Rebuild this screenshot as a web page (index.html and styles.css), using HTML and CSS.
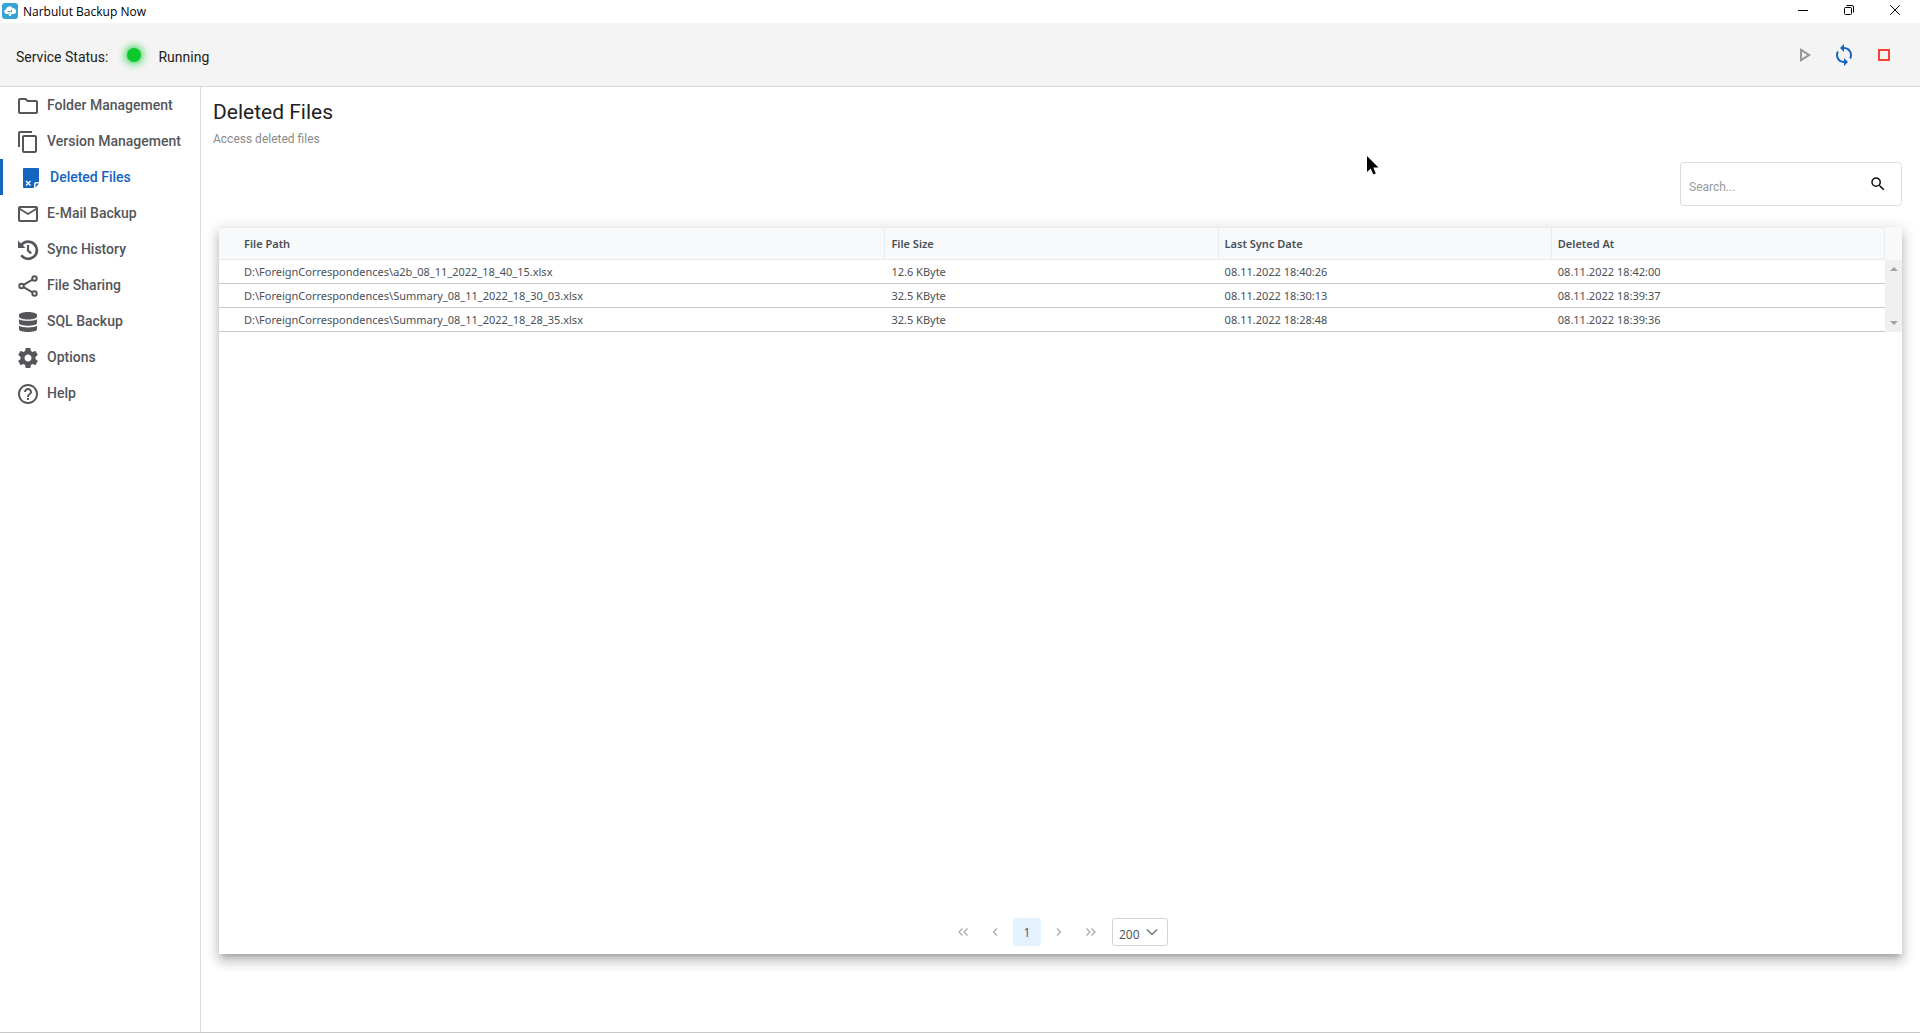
FILE: index.html
```html
<!DOCTYPE html>
<html lang="en">
<head>
    <meta charset="UTF-8">
    <meta name="viewport" content="width=device-width, initial-scale=1.0">
    <title>Narbulut Backup Now</title>
    <link rel="stylesheet" href="styles.css">
</head>
<body>
    <div class="titlebar">
        <svg class="logo" viewBox="0 0 16 16">
            <rect width="16" height="16" rx="3" fill="#35a3d6"/>
            <path d="M4.3 11a2.4 2.4 0 0 1-.3-4.7A3.6 3.6 0 0 1 10.700 5.200a3 3 0 0 1 1.400 5.800z" fill="#fff"/>
            <path d="M5.500 8.500h3M9.500 6.800v2.400M7.500 11.500V10" stroke="#35a3d6" stroke-width="1" fill="none"/>
            <circle cx="8" cy="11.800" r="1.300" fill="#fff"/>
        </svg>
        <span class="app-name">Narbulut Backup Now</span>
        <div class="window-controls">
            <button aria-label="Minimize"><svg viewBox="0 0 10 10"><path d="M0 5.5h10"/></svg></button>
            <button aria-label="Restore"><svg viewBox="0 0 10 10"><rect x=".5" y="2.500" width="7" height="7" rx="1"/><path d="M2.500.5H8A1.500 1.500 0 0 1 9.500 2v5.500"/></svg></button>
            <button aria-label="Close"><svg viewBox="0 0 10 10"><path d="M.2.2l9.600 9.600M9.800.2L.2 9.800"/></svg></button>
        </div>
    </div>

    <header>
        <span class="status-text">Service Status:</span>
        <span class="status-dot"></span>
        <span class="status-text">Running</span>
        <div class="service-actions">
            <button class="start" aria-label="Start"><svg viewBox="0 0 24 24"><path d="M10 8.640L15.270 12 10 15.360V8.640M8 5v14l11-7L8 5z"/></svg></button>
            <button class="restart" aria-label="Restart"><svg viewBox="0 0 24 24"><path d="M12 4V1L8 5l4 4V6c3.310 0 6 2.690 6 6 0 1.010-.25 1.970-.7 2.800l1.460 1.460C19.540 15.030 20 13.570 20 12c0-4.420-3.580-8-8-8zm0 14c-3.310 0-6-2.690-6-6 0-1.010.25-1.970.7-2.800L5.240 7.740C4.460 8.970 4 10.430 4 12c0 4.420 3.580 8 8 8v3l4-4-4-4v3z"/></svg></button>
            <button class="stop" aria-label="Stop"><svg viewBox="0 0 24 24"><path d="M16 8v8H8V8h8m2-2H6v12h12V6z"/></svg></button>
        </div>
    </header>

    <div class="layout">
        <nav class="sidebar">
            <a href="#"><svg viewBox="0 0 24 24"><path d="M9.170 6l2 2H20v10H4V6h5.170M10 4H4c-1.100 0-1.990.9-1.990 2L2 18c0 1.100.9 2 2 2h16c1.100 0 2-.9 2-2V8c0-1.100-.9-2-2-2h-8l-2-2z"/></svg>Folder Management</a>
            <a href="#"><svg viewBox="0 0 24 24"><path d="M16 1H4c-1.100 0-2 .9-2 2v14h2V3h12V1zm3 4H8c-1.100 0-2 .9-2 2v14c0 1.100.9 2 2 2h11c1.100 0 2-.9 2-2V7c0-1.100-.9-2-2-2zm0 16H8V7h11v14z"/></svg>Version Management</a>
            <a href="#" class="active"><svg viewBox="0 0 24 24"><path d="M5 2h14a1 1 0 0 1 1 1v13h-3a2 2 0 0 0-2 2v4H5a1 1 0 0 1-1-1V3a1 1 0 0 1 1-1z"/><path d="M16.500 21.500v-4h3.500z"/><path d="M7 15l4.500 4.500M11.500 15L7 19.500" stroke="#fff" stroke-width="1.400"/></svg>Deleted Files</a>
            <a href="#"><svg viewBox="0 0 24 24"><path d="M22 6c0-1.100-.9-2-2-2H4c-1.100 0-2 .9-2 2v12c0 1.100.9 2 2 2h16c1.100 0 2-.9 2-2V6zm-2 0l-8 5-8-5h16zm0 12H4V8l8 5 8-5v10z"/></svg>E-Mail Backup</a>
            <a href="#"><svg viewBox="0 0 24 24"><path d="M2 2.500v7.500h7.500L6.800 7.300A7.300 7.300 0 1 1 6.300 16.600l-2.100 1.500A10 10 0 1 0 4.900 5.400z"/><path d="M12 7v5.500l3.200 2.800" fill="none" stroke="#54565a" stroke-width="2.200"/></svg>Sync History</a>
            <a href="#"><svg viewBox="0 0 24 24"><g fill="none" stroke="#54565a" stroke-width="2"><circle cx="18.500" cy="4.500" r="2.200"/><circle cx="5.500" cy="12" r="2.200"/><circle cx="18.500" cy="19.500" r="2.200"/><path d="M7.500 10.900l9-5.200M7.500 13.100l9 5.200"/></g></svg>File Sharing</a>
            <a href="#"><svg viewBox="0 0 24 24"><path d="M3 5c0-4 18-4 18 0v1.500c0 4-18 4-18 0z"/><path d="M3 9.200c3.500 2.200 14.500 2.200 18 0v3.800c0 3.600-18 3.600-18 0z"/><path d="M3 15.800c3.500 2.200 14.500 2.200 18 0v3.500c0 3.600-18 3.600-18 0z"/></svg>SQL Backup</a>
            <a href="#"><svg viewBox="0 0 24 24"><path d="M19.430 12.980c.04-.32.07-.64.07-.98s-.03-.66-.07-.98l2.110-1.650c.19-.15.24-.42.12-.64l-2-3.460c-.12-.22-.39-.3-.61-.22l-2.490 1c-.52-.4-1.080-.73-1.690-.98l-.38-2.650A.49.49 0 0 0 14 2h-4c-.25 0-.46.18-.49.42l-.38 2.650c-.61.25-1.170.59-1.690.98l-2.490-1c-.23-.09-.49 0-.61.22l-2 3.460c-.13.22-.07.49.12.64l2.110 1.650c-.04.32-.07.65-.07.98s.03.66.07.98l-2.110 1.650c-.19.15-.24.42-.12.64l2 3.460c.12.22.39.3.61.22l2.490-1c.52.4 1.080.73 1.690.98l.38 2.650c.03.24.24.42.49.42h4c.25 0 .46-.18.49-.42l.38-2.650c.61-.25 1.170-.59 1.690-.98l2.490 1c.23.09.49 0 .61-.22l2-3.460c.12-.22.07-.49-.12-.64l-2.110-1.650zM12 15.500c-1.930 0-3.500-1.570-3.500-3.500s1.570-3.500 3.500-3.500 3.500 1.570 3.500 3.500-1.570 3.500-3.500 3.500z"/></svg>Options</a>
            <a href="#"><svg viewBox="0 0 24 24"><path d="M11 18h2v-2h-2v2zm1-16C6.480 2 2 6.480 2 12s4.480 10 10 10 10-4.480 10-10S17.520 2 12 2zm0 18c-4.410 0-8-3.590-8-8s3.590-8 8-8 8 3.590 8 8-3.590 8-8 8zm0-14c-2.210 0-4 1.790-4 4h2c0-1.100.9-2 2-2s2 .9 2 2c0 2-3 1.750-3 5h2c0-2.250 3-2.500 3-5 0-2.210-1.790-4-4-4z"/></svg>Help</a>
        </nav>

        <main>
            <h1>Deleted Files</h1>
            <p class="subtitle">Access deleted files</p>

            <div class="search">
                <input type="text" placeholder="Search..." aria-label="Search">
                <button aria-label="Search"><svg viewBox="0 0 24 24"><path d="M15.500 14h-.79l-.28-.27A6.471 6.471 0 0 0 16 9.500 6.500 6.500 0 1 0 9.500 16c1.610 0 3.090-.59 4.230-1.570l.27.28v.79l5 4.990L20.490 19l-4.990-5zm-6 0C7.010 14 5 11.990 5 9.500S7.010 5 9.500 5 14 7.010 14 9.500 11.990 14 9.500 14z"/></svg></button>
            </div>

            <div class="card">
                <div class="table-area">
                    <table>
                        <thead>
                            <tr>
                                <th class="path">File Path</th>
                                <th>File Size</th>
                                <th>Last Sync Date</th>
                                <th>Deleted At</th>
                            </tr>
                        </thead>
                        <tbody>
                            <tr>
                                <td>D:\ForeignCorrespondences\a2b_08_11_2022_18_40_15.xlsx</td>
                                <td>12.6 KByte</td>
                                <td>08.11.2022 18:40:26</td>
                                <td>08.11.2022 18:42:00</td>
                            </tr>
                            <tr>
                                <td>D:\ForeignCorrespondences\Summary_08_11_2022_18_30_03.xlsx</td>
                                <td>32.5 KByte</td>
                                <td>08.11.2022 18:30:13</td>
                                <td>08.11.2022 18:39:37</td>
                            </tr>
                            <tr>
                                <td>D:\ForeignCorrespondences\Summary_08_11_2022_18_28_35.xlsx</td>
                                <td>32.5 KByte</td>
                                <td>08.11.2022 18:28:48</td>
                                <td>08.11.2022 18:39:36</td>
                            </tr>
                        </tbody>
                    </table>
                    <div class="scroll-col">
                        <div class="scroll-head"></div>
                        <div class="scrollbar">
                            <svg viewBox="0 0 8 4"><path d="M0 4l4-4 4 4z"/></svg>
                            <svg viewBox="0 0 8 4"><path d="M0 0l4 4 4-4z"/></svg>
                        </div>
                    </div>
                </div>

                <div class="paginator">
                    <button aria-label="First page"><svg viewBox="0 0 12 12"><path d="M5.500 2.500L2 6l3.500 3.500M10.500 2.500L7 6l3.500 3.500"/></svg></button>
                    <button aria-label="Previous page"><svg viewBox="0 0 12 12"><path d="M8 2.500L4.500 6 8 9.500"/></svg></button>
                    <button class="current">1</button>
                    <button aria-label="Next page"><svg viewBox="0 0 12 12"><path d="M4 2.500L7.500 6 4 9.500"/></svg></button>
                    <button aria-label="Last page"><svg viewBox="0 0 12 12"><path d="M1.500 2.500L5 6 1.500 9.500M6.500 2.500L10 6 6.500 9.500"/></svg></button>
                    <div class="page-size">
                        <select aria-label="Rows per page">
                            <option>200</option>
                        </select>
                        <svg viewBox="0 0 12 12"><path d="M1 3.500l5 5 5-5"/></svg>
                    </div>
                </div>
            </div>

            <svg class="cursor" viewBox="0 0 12 19"><path d="M0 0v16l3.700-3.500L6.300 18.500l2.500-1L6.300 11.500H11.500z"/></svg>
        </main>
    </div>
</body>
</html>
```

FILE: styles.css
```css
* {
    box-sizing: border-box;
}
body {
    margin: 0;
    min-height: 100vh;
    display: flex;
    flex-direction: column;
    font-family: Roboto, Arial, sans-serif;
    font-size: 14px;
    color: #212121;
    background-color: #fff;
    border-bottom: 1px solid #c8c8c8;
}
button {
    border: none;
    background: none;
    padding: 0;
    cursor: pointer;
}
svg {
    display: block;
    flex: none;
}

/* title bar */
.titlebar {
    display: flex;
    align-items: center;
    height: 23px;
    padding: 0 2px 1px;
    color: #000;
}
.logo {
    width: 16px;
    height: 16px;
}
.app-name {
    margin-left: 5px;
    font-family: "Open Sans", "Noto Sans", sans-serif;
    font-size: 12px;
}
.window-controls {
    display: flex;
    align-self: flex-start;
    margin-left: auto;
    height: 20px;
}
.window-controls button {
    display: flex;
    align-items: center;
    justify-content: center;
    width: 46px;
}
.window-controls svg {
    width: 10px;
    height: 10px;
    fill: none;
    stroke: #000;
}

/* service status */
header {
    display: flex;
    align-items: center;
    height: 64px;
    padding: 0 24px 0 16px;
    background-color: #f4f4f4;
    border-bottom: 1px solid #d6d6d6;
}
.status-text {
    padding-top: 4px;
}
.status-dot {
    width: 14px;
    height: 14px;
    margin: 0 17px 0 19px;
    border-radius: 50%;
    background-color: #0bc92b;
    box-shadow: 0 0 8px 1px #0bc92b;
}
.service-actions {
    display: flex;
    gap: 16px;
    margin-left: auto;
}
.service-actions svg {
    width: 24px;
    height: 24px;
}
.start {
    fill: #999;
}
.restart {
    fill: #1565c0;
}
.stop {
    fill: #f44336;
}

.layout {
    display: flex;
    flex: 1;
}

/* menu */
.sidebar {
    width: 201px;
    flex: none;
    border-right: 1px solid #dcdcdc;
}
.sidebar a {
    display: flex;
    align-items: center;
    gap: 7px;
    height: 36px;
    padding-left: 16px;
    color: #54565a;
    font-weight: 500;
    text-decoration: none;
}
.sidebar svg {
    width: 24px;
    height: 24px;
    margin-top: 2px;
    fill: #54565a;
}
.sidebar .active {
    color: #1565c0;
    border-left: 3px solid #1565c0;
}
.sidebar .active svg {
    fill: #1565c0;
}

/* content */
main {
    position: relative;
    display: flex;
    flex-direction: column;
    flex: 1;
    padding: 12px 18px 78px;
}
h1 {
    margin: 0 0 0 -6px;
    font-size: 21px;
    line-height: 26px;
    font-weight: 400;
}
.subtitle {
    margin: 6px 0 0 -6px;
    font-size: 12px;
    line-height: 16px;
    color: #8a8a8a;
}
.search {
    display: flex;
    align-items: center;
    align-self: flex-end;
    width: 222px;
    height: 44px;
    margin: 15px 0 21px;
    padding: 0 14px 0 8px;
    border: 1px solid #dedede;
    border-radius: 4px;
}
.search input {
    flex: 1;
    min-width: 0;
    padding: 5px 0 0;
    border: none;
    outline: none;
    font-family: Roboto, Arial, sans-serif;
    font-size: 12px;
}
.search input::placeholder {
    color: #9a9a9a;
}
.search svg {
    width: 18px;
    height: 18px;
    fill: #111;
}
.card {
    display: flex;
    flex-direction: column;
    justify-content: space-between;
    flex: 1;
    background-color: #fff;
    box-shadow: 0 5px 5px -3px rgba(0, 0, 0, 0.2), 0 8px 10px 1px rgba(0, 0, 0, 0.14), 0 3px 14px 2px rgba(0, 0, 0, 0.12);
}

/* table */
.table-area {
    display: flex;
}
table {
    width: 100%;
    table-layout: fixed;
    border-collapse: separate;
    border-spacing: 0;
    font-family: "Noto Sans", "Open Sans", sans-serif;
    font-size: 11px;
    color: #495057;
}
th {
    height: 33px;
    padding: 0 6px;
    text-align: left;
    font-weight: 600;
    background-color: #f8f9fb;
    border: 1px solid #e9ecef;
    border-left: none;
}
td {
    height: 24px;
    padding: 0 6px;
    line-height: 16px;
    border-bottom: 1px solid #c6c6c6;
}
th:first-child,
td:first-child {
    padding-left: 25px;
}
.path {
    width: 40%;
}
.scroll-col {
    display: flex;
    flex-direction: column;
    flex: none;
    width: 17px;
}
.scroll-head {
    height: 33px;
    background-color: #f8f9fb;
}
.scrollbar {
    display: flex;
    flex-direction: column;
    justify-content: space-between;
    align-items: center;
    flex: 1;
    padding: 7px 0;
    background-color: #f0f0f0;
}
.scrollbar svg {
    width: 8px;
    height: 4px;
    fill: #a3a3a3;
}

/* paginator */
.paginator {
    display: flex;
    justify-content: center;
    gap: 4px;
    padding: 8px 12px 8px 8px;
}
.paginator button {
    display: flex;
    align-items: center;
    justify-content: center;
    width: 28px;
    height: 28px;
    border-radius: 3px;
    font-family: "Open Sans", "Noto Sans", sans-serif;
    font-size: 12px;
    color: #495057;
}
.paginator .current {
    background-color: #e3f2fd;
}
.paginator svg {
    width: 12px;
    height: 12px;
    fill: none;
    stroke: #a5abb1;
    stroke-width: 1.3;
}
.page-size {
    position: relative;
    margin-left: 3px;
}
.page-size select {
    width: 56px;
    height: 28px;
    padding: 4px 0 0 6px;
    appearance: none;
    border: 1px solid #ced4da;
    border-radius: 3px;
    background-color: #fff;
    font-family: "Open Sans", "Noto Sans", sans-serif;
    font-size: 12px;
    color: #495057;
}
.page-size svg {
    position: absolute;
    top: 8px;
    right: 10px;
    stroke: #6c757d;
}

/* pointer */
.cursor {
    position: absolute;
    top: 69px;
    left: 1166px;
    width: 12px;
    height: 19px;
}
```
